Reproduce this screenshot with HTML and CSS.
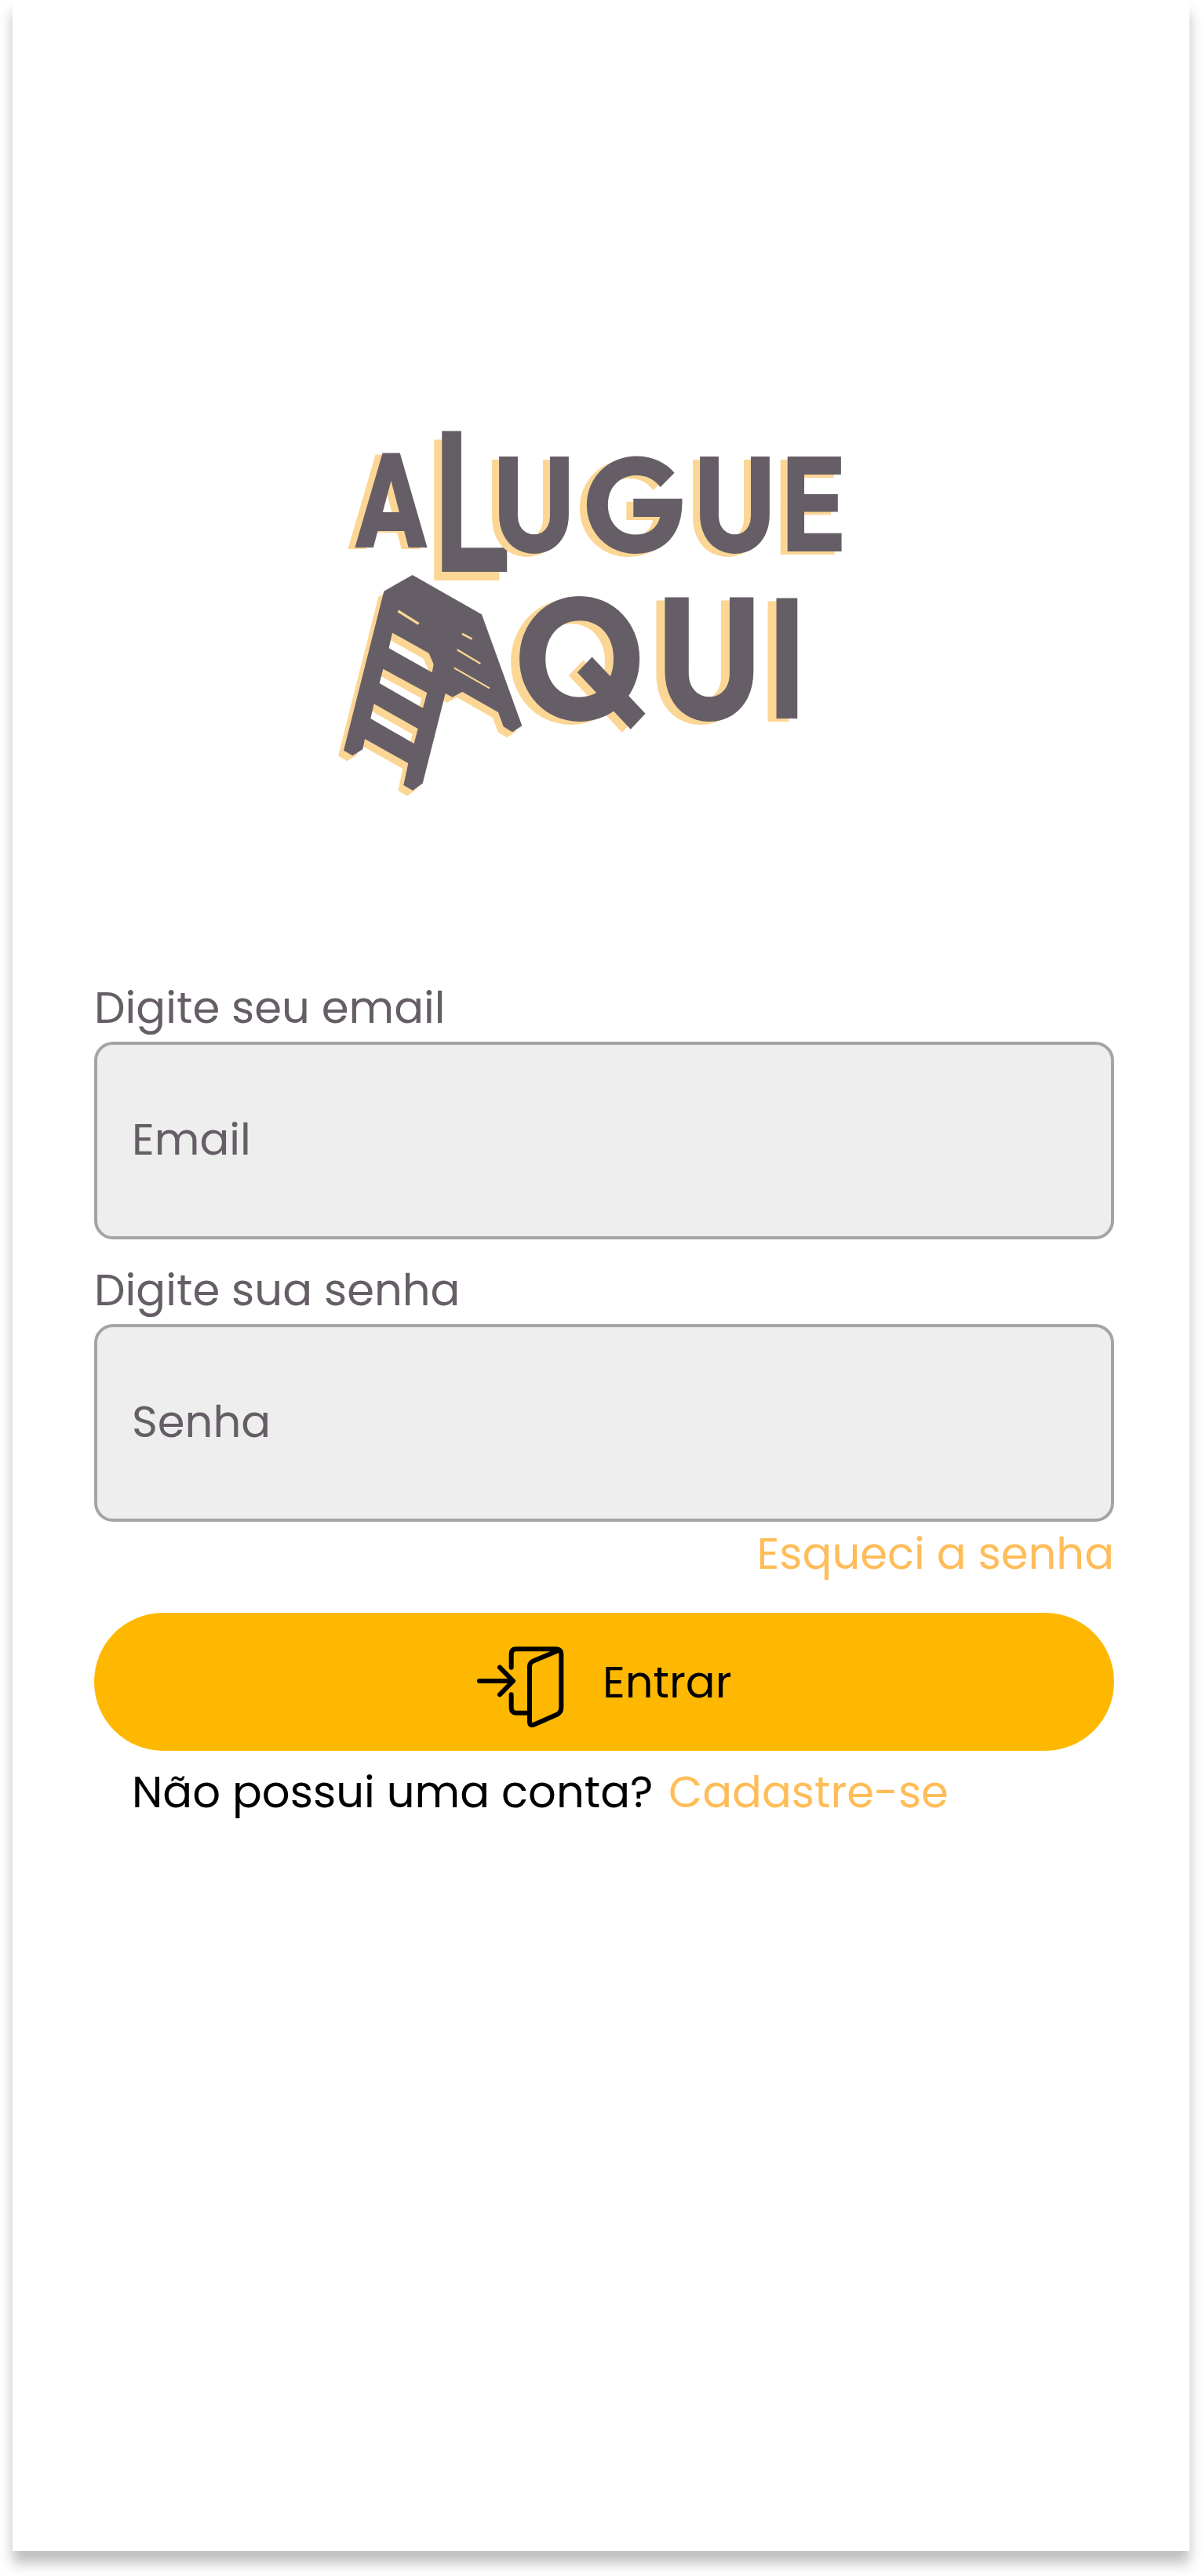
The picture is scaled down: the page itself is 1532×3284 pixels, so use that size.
FILE: index.html
```
<!DOCTYPE html>
<html lang="pt-BR">
<head>
<meta charset="utf-8">
<title>Alugue Aqui</title>
<link rel="stylesheet" href="styles.css">
</head>
<body>
<main class="screen">
  <svg class="logo" viewBox="420 540 670 480" role="img" aria-label="Alugue Aqui">
    <g class="shade-a"><text class="heavy" transform="translate(451 697.5) scale(1.28 1.7)">A</text></g>
    <g class="shade-l"><text class="medium" transform="translate(550.2 729) scale(1.81 2.557)">L</text></g>
    <g class="shade-top">
      <text transform="translate(627.5 703.8) scale(1.51 1.718)">U</text>
      <text transform="translate(742.5 703.8) scale(1.675 1.715)">G</text>
      <text transform="translate(883.5 703.8) scale(1.51 1.718)">U</text>
      <text transform="translate(994.5 703) scale(1.358 1.714)">E</text>
    </g>
    <g class="shade-bottom">
      <text transform="translate(655.5 917) scale(2.06 2.2)">Q</text>
      <text transform="translate(836.5 918) scale(1.92 2.204)">U</text>
      <text transform="translate(978 915.5) scale(1.7 2.171)">I</text>
    </g>
    <g class="shade-ladder">
      <path fill-rule="evenodd" transform="translate(420 720) scale(.33333)" d="M317 39L582 190L736 616L699 640L665 619L645 564L508 486L470 506L443 492L356 836L318 863L283 843L301 759L135 666L127 706L88 730L54 710L208 101ZM240 260L380 338L398 380L392 412L227 319ZM205 398L373 490L357 548L191 453ZM170 532L338 627L323 684L157 588Z"/>
    </g>
    <g class="slits" transform="translate(420 720) scale(.33333)">
      <path stroke-width="10" d="M262 177L341 226"/>
      <path stroke-width="8" d="M507 264L545 284"/>
      <path stroke-width="7" d="M488 325L577 378"/>
      <path stroke-width="6" d="M476 394L612 472"/>
    </g>
  </svg>

  <form class="form">
    <div class="label">Digite seu email</div>
    <div class="field">Email</div>
    <div class="label">Digite sua senha</div>
    <div class="field">Senha</div>
    <a class="forgot">Esqueci a senha</a>
    <div class="submit">
      <svg class="enter-icon" viewBox="84 72 336 360">
        <path d="M215 197V147Q215 127 233 127H388Q406 129 406 147V350Q406 369 388 378L301 416Q285 422 285 405V192Q286 177 303 171L394 133"/>
        <path d="M215 301V352Q216 371 233 371H284"/>
        <path d="M93 249H222M171 197L222 249L171 301"/>
      </svg>
      <span class="submit-text">Entrar</span>
    </div>
    <p class="signup"><span class="question">Não possui uma conta?</span><a class="link">Cadastre-se</a></p>
  </form>
</main>
</body>
</html>
```
FILE: styles.css
```
body {
  margin: 0;
  padding-bottom: 32px;
  background: #fff;
  color: #000;
  font-family: Poppins, Inter, sans-serif;
  font-size: 56px;
  line-height: 84px;
}

.screen {
  box-sizing: border-box;
  width: 1500px;
  height: 3252px;
  margin: 0 auto;
  padding: 540px 96px 0 104px;
  background: #fff;
  box-shadow: 0 16px 16px rgba(0, 0, 0, 0.25);
}

.logo {
  display: block;
  width: 670px;
  height: 480px;
  margin: 0 0 223px 300px;
  overflow: visible;
  fill: #665e66;
  font-family: Outfit, Poppins, sans-serif;
  font-size: 100px;
  font-weight: 700;
}

.heavy { font-weight: 800; }
.medium { font-weight: 600; }

.shade-a { filter: drop-shadow(-8.5px 2px 0 #fbd695); }
.shade-l { filter: drop-shadow(-10px 11px 0 #fbd695); }
.shade-top { filter: drop-shadow(-9px 4px 0 #fbd695); }
.shade-bottom { filter: drop-shadow(-11px 4px 0 #fbd695); }
.shade-ladder { filter: drop-shadow(-6.3px 7px 0 #fbd695); }

.slits {
  fill: none;
  stroke: #fbd695;
}

.form {
  display: flex;
  flex-direction: column;
}

.label {
  margin-bottom: 1px;
  color: #665e66;
}

.field {
  box-sizing: border-box;
  height: 252px;
  margin-bottom: 23px;
  padding: 79px 44px 0;
  border: 4px solid #a4a4a4;
  border-radius: 24px;
  background: #eee;
  color: #665e66;
}

.forgot {
  align-self: flex-end;
  margin-top: -24px;
  color: #ffbd59;
}

.submit {
  display: flex;
  align-items: center;
  gap: 48px;
  box-sizing: border-box;
  height: 176px;
  margin-top: 33px;
  padding-left: 488px;
  border-radius: 88px;
  background: #ffb802;
}

.submit-text {
  padding-top: 2px;
}

.enter-icon {
  width: 112px;
  height: 120px;
  fill: none;
  stroke: #000;
  stroke-width: 18;
  stroke-linecap: round;
  stroke-linejoin: round;
}

.signup {
  display: flex;
  margin: 11px 0 0;
  padding-left: 48px;
}

.question {
  width: 684px;
}

.link {
  color: #ffbd59;
}
```
